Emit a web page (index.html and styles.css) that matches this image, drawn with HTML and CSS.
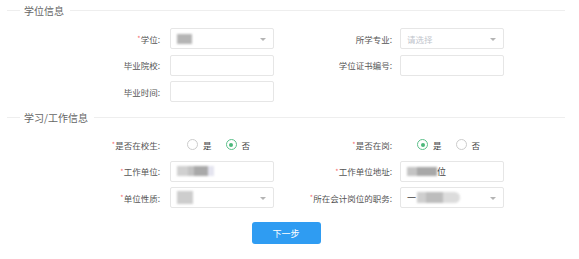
FILE: index.html
```html
<!DOCTYPE html>
<html lang="zh-CN">
  <head>
    <meta charset="UTF-8" />
    <meta name="viewport" content="width=device-width, initial-scale=1.0" />
    <title>学位信息</title>
    <link rel="stylesheet" href="styles.css">
  </head>
  <body>
    <div class="page">
      <div class="block-title"><span>学位信息</span></div>
      <div class="form-grid">
        <label class="label"><i>*</i>学位:</label>
        <div class="field select">
          <span class="mask mask-degree"></span>
          <b class="arrow"></b>
        </div>
        <label class="label">所学专业:</label>
        <div class="field select">
          <span class="placeholder">请选择</span>
          <b class="arrow"></b>
        </div>

        <label class="label">毕业院校:</label>
        <div class="field"></div>
        <label class="label">学位证书编号:</label>
        <div class="field"></div>

        <label class="label">毕业时间:</label>
        <div class="field"></div>
      </div>

      <div class="block-title second"><span>学习/工作信息</span></div>
      <div class="form-grid">
        <label class="label"><i>*</i>是否在校生:</label>
        <div class="radios">
          <span class="radio"><b class="dot"></b>是</span>
          <span class="radio on"><b class="dot"></b>否</span>
        </div>
        <label class="label"><i>*</i>是否在岗:</label>
        <div class="radios">
          <span class="radio on"><b class="dot"></b>是</span>
          <span class="radio"><b class="dot"></b>否</span>
        </div>

        <label class="label"><i>*</i>工作单位:</label>
        <div class="field">
          <span class="mask mask-unit"></span>
        </div>
        <label class="label"><i>*</i>工作单位地址:</label>
        <div class="field">
          <span class="mask mask-addr"></span><span class="value">位</span>
        </div>

        <label class="label"><i>*</i>单位性质:</label>
        <div class="field select">
          <span class="mask mask-type"></span>
          <b class="arrow"></b>
        </div>
        <label class="label"><i>*</i>所在会计岗位的职务:</label>
        <div class="field select">
          <span class="value">一</span><span class="mask mask-post"></span>
          <b class="arrow"></b>
        </div>
      </div>

      <div class="actions">
        <button type="button" class="next">下一步</button>
      </div>
    </div>
  </body>
</html>
```

FILE: styles.css
```css
* {
  box-sizing: border-box;
  margin: 0;
  padding: 0;
  font-family: "Noto Sans CJK SC", "Noto Sans", sans-serif;
}

body {
  background-color: white;
  color: #555;
}
.page {
  width: 579px;
  padding: 0 14px 0 7px;
}
.block-title {
  display: flex;
  align-items: center;
  height: 20px;
  font-size: 10px;
  color: #666;
}
.block-title::before {
  content: "";
  width: 13px;
  height: 1px;
  background: #eee;
}
.block-title::after {
  content: "";
  flex: 1;
  height: 1px;
  background: #eee;
}
.block-title span {
  padding: 0 6px 0 4px;
}
.second {
  margin-top: 5px;
}
.form-grid {
  display: grid;
  grid-template-columns: 163px 104px 126px 104px;
  grid-auto-rows: 21px;
  row-gap: 5.5px;
  margin-top: 8px;
}
.second + .form-grid {
  margin-top: 7px;
}
.label {
  display: flex;
  align-items: center;
  justify-content: flex-end;
  padding-right: 10px;
  font-size: 8.5px;
  color: #555;
}
.label i {
  font-style: normal;
  color: #f56c6c;
  font-size: 7px;
  align-self: flex-start;
  margin-top: 5px;
}
.form-grid .label:nth-child(4n+3) {
  padding-right: 8px;
}
.field {
  position: relative;
  display: flex;
  align-items: center;
  padding-left: 6px;
  border: 1px solid #e6e6e6;
  border-radius: 2px;
  background: white;
  font-size: 9px;
  color: #444;
}
.placeholder {
  color: #c0c4cc;
  font-size: 8.5px;
}
.arrow {
  position: absolute;
  right: 7px;
  top: 9px;
  width: 0;
  height: 0;
  border-left: 3px solid transparent;
  border-right: 3px solid transparent;
  border-top: 3px solid #b4b4b4;
}
.mask {
  display: block;
  filter: blur(1px);
}
.mask-degree {
  width: 15px;
  height: 10px;
  background: #b5b5b5;
}
.mask-unit {
  width: 37px;
  height: 10px;
  background: linear-gradient(to right, #d0d0d0 0 30%, #c2c2c2 30% 45%, #a9a9a9 45% 85%, #e4e4ef 85%);
}
.mask-type {
  width: 16px;
  height: 13px;
  background: #cdcdcd;
}
.mask-addr {
  width: 30px;
  height: 9px;
  background: linear-gradient(to right, #c4c4c4 0 35%, #a8a8a8 35% 100%);
}
.mask-post {
  width: 43px;
  height: 11px;
  margin-left: 1px;
  border-radius: 0 6px 6px 0;
  background: linear-gradient(to right, #cfcfcf 0 20%, #bdbdbd 20% 60%, #dcdcdc 60%);
}
.radios {
  display: flex;
  align-items: center;
  gap: 14px;
  padding-left: 17px;
}
.radio {
  display: flex;
  align-items: center;
  gap: 5px;
  font-size: 8.5px;
  color: #444;
}
.dot {
  position: relative;
  width: 11px;
  height: 11px;
  border: 1px solid #ccc;
  border-radius: 50%;
}
.on .dot {
  border-color: #5cc08a;
}
.on .dot::after {
  content: "";
  position: absolute;
  left: 2.5px;
  top: 2.5px;
  width: 4px;
  height: 4px;
  border-radius: 50%;
  background: #4cb87b;
}
.actions {
  display: flex;
  justify-content: center;
  margin-top: 14px;
}
.next {
  width: 69px;
  height: 22px;
  border: none;
  border-radius: 3px;
  background: #2f9cf2;
  color: white;
  font-size: 9px;
}
```
